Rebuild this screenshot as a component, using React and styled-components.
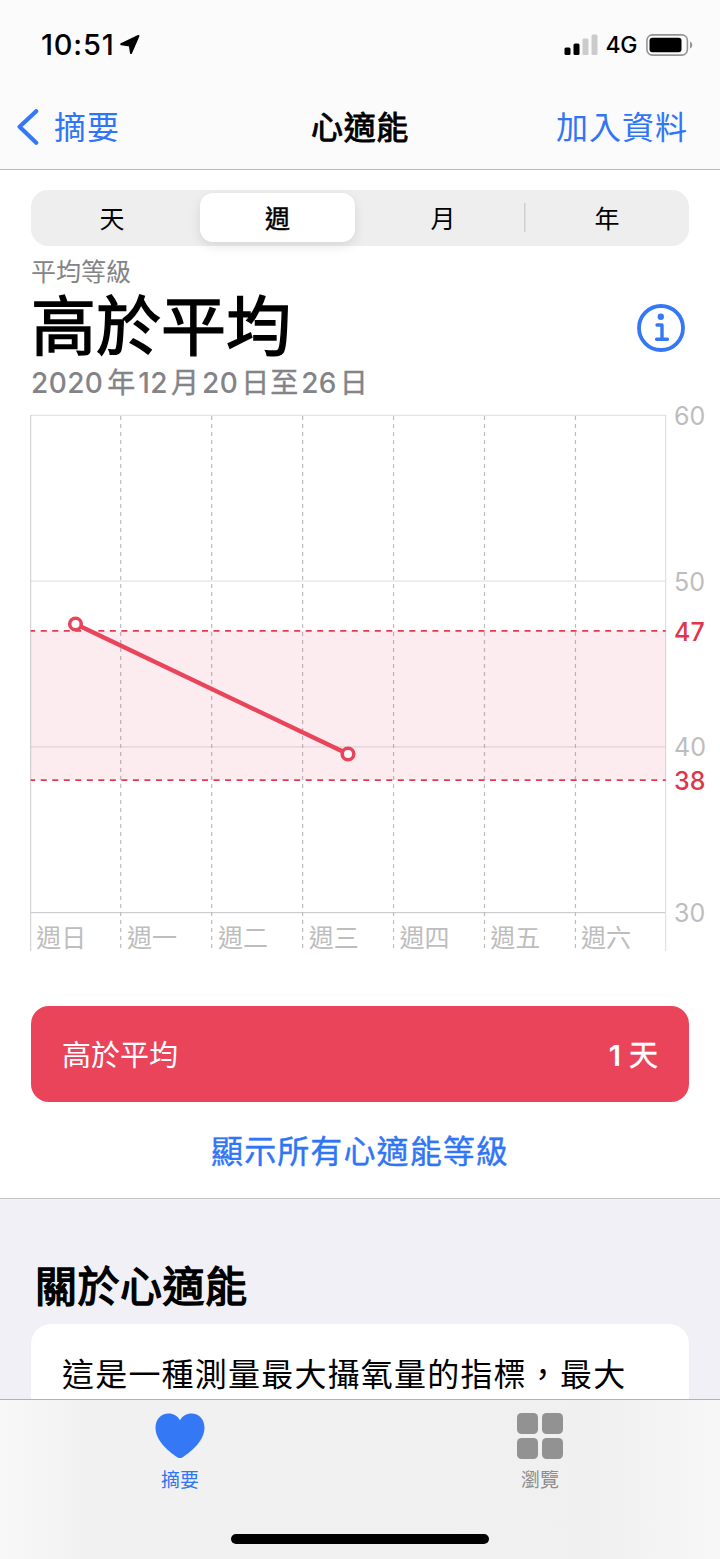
import React from 'react'
import styled, { createGlobalStyle } from 'styled-components'

const GlobalStyle = createGlobalStyle`
  * {
    box-sizing: border-box;
  }
  body {
    margin: 0;
    background: #fff;
    font-family: Inter, 'Noto Sans CJK TC', sans-serif;
    color: #000;
    text-autospace: no-autospace;
  }
`

const Phone = styled.div`
  width: 720px;
  height: 1559px;
  overflow: hidden;
  display: flex;
  flex-direction: column;
`

const Header = styled.header`
  height: 170px;
  background: #fbfbfc;
  border-bottom: 1px solid #b9b9bb;
`

const StatusBar = styled.div`
  height: 88px;
  padding: 1px 27px 0 41px;
  display: flex;
  align-items: center;
  justify-content: space-between;
`

const StatusGroup = styled.div`
  display: flex;
  align-items: center;
`

const Time = styled.span`
  font-size: 29px;
  font-weight: 550;
  line-height: 40px;
  letter-spacing: 0.8px;
  margin-right: 5px;
`

const Network = styled.span`
  font-size: 23px;
  font-weight: 450;
  line-height: 40px;
  letter-spacing: -0.4px;
  margin: 0 9px 0 8px;
`

const NavBar = styled.nav`
  height: 80px;
  padding: 0 32px 0 17px;
  display: flex;
  align-items: center;
  justify-content: space-between;
`

const NavLink = styled.a`
  display: flex;
  align-items: center;
  gap: 15px;
  color: #3075f6;
  font-size: 32px;
  letter-spacing: 1px;
  line-height: 48px;
`

const NavTitle = styled.h1`
  margin: 0 0 0 44px;
  font-size: 32px;
  line-height: 48px;
  font-weight: 400;
  letter-spacing: 0.6px;
  -webkit-text-stroke: 0.9px #000;
`

const Segments = styled.div`
  height: 56px;
  margin: 20px 31px 0;
  padding: 3px 0 4px;
  display: grid;
  grid-template-columns: 162px 168px 164px 164px;
  background: #eeeeef;
  border-radius: 17px;
`

const Segment = styled.button`
  border: 0;
  padding: 0 0 2px;
  margin: ${(props) => (props.$active ? '0 6px 0 7px' : '0')};
  background: ${(props) => (props.$active ? '#fff' : 'transparent')};
  border-radius: 13px;
  box-shadow: ${(props) => (props.$active ? '0 4px 12px rgba(0, 0, 0, 0.1)' : 'none')};
  font-family: inherit;
  font-size: 25px;
  font-weight: 400;
  -webkit-text-stroke: ${(props) => (props.$active ? '0.5px #000' : '0')};
  color: #000;
  display: flex;
  align-items: center;
  justify-content: center;
`

const DividedSegment = styled(Segment)`
  background: linear-gradient(#cfcfd2, #cfcfd2) left center / 1.5px 29px no-repeat;
  margin-left: -1px;
  padding-left: 1px;
  border-radius: 0;
`

const Summary = styled.section`
  height: 154px;
  padding: 8px 35px 0 31px;
  display: flex;
  justify-content: space-between;
`

const Label = styled.div`
  font-size: 25px;
  line-height: 36px;
  color: #838388;
`

const Level = styled.div`
  padding-top: 2px;
  font-size: 65px;
  line-height: 70px;
  font-weight: 400;
  -webkit-text-stroke: 1.4px #000;
`

const Range = styled.div`
  display: flex;
  font-size: 28px;
  line-height: 42px;
  letter-spacing: 1px;
  color: #838388;
  -webkit-text-stroke: 0.4px #838388;
`

const RangeNumber = styled.span`
  margin-right: ${(props) => props.$gap || 3}px;
  font-weight: 550;
  letter-spacing: 0.4px;
  -webkit-text-stroke: 0;
`

const RangeUnit = styled.span`
  margin-right: 2px;
`

const InfoButton = styled.button`
  align-self: flex-start;
  margin: 50px 0 0;
  padding: 0;
  border: 0;
  background: none;
  height: 48px;
`

const ChartSvg = styled.svg`
  display: block;
  flex: none;
`

const AxisText = styled.text`
  font-size: 25px;
  fill: ${(props) => (props.$accent ? '#e0354b' : '#bdbdbe')};
  font-weight: ${(props) => (props.$accent ? 450 : 400)};
`

const Banner = styled.div`
  height: 96px;
  flex: none;
  margin: 46px 31px 0;
  padding: 0 31px 3px;
  display: flex;
  align-items: center;
  justify-content: space-between;
  background: #ea445a;
  border-radius: 18px;
  color: #fff;
  font-size: 29px;
`

const Days = styled.span`
  display: flex;
  align-items: baseline;
  gap: 8px;
  -webkit-text-stroke: 0.4px #fff;
`

const DayCount = styled.span`
  font-weight: 600;
  -webkit-text-stroke: 0;
`

const ShowAll = styled.a`
  height: 96px;
  flex: none;
  padding-bottom: 3px;
  display: flex;
  align-items: center;
  justify-content: center;
  color: #3075f6;
  font-size: 32px;
  letter-spacing: 1.1px;
  -webkit-text-stroke: 0.4px #3075f6;
`

const About = styled.section`
  flex: 1;
  min-height: 0;
  overflow: hidden;
  background: #f1f0f6;
  border-top: 1px solid #c6c6ca;
  padding: 58px 31px 0;
`

const AboutTitle = styled.h2`
  margin: 0 0 7px 4px;
  font-size: 42px;
  line-height: 60px;
  font-weight: 400;
  letter-spacing: 0.5px;
  -webkit-text-stroke: 1.4px #000;
`

const AboutCard = styled.div`
  height: 200px;
  padding: 27px 31px;
  background: #fff;
  border-radius: 20px;
  font-size: 32px;
  line-height: 48px;
  letter-spacing: 1.2px;
`

const TabBar = styled.footer`
  height: 160px;
  flex: none;
  border-top: 1px solid #b3b3b6;
  background: linear-gradient(90deg, #f8f8f8 0, #f1f1f1 90px, #f0f0f0 600px, #f7f7f7 720px);
  display: flex;
  flex-direction: column;
  align-items: center;
`

const Tabs = styled.div`
  width: 100%;
  height: 134px;
  display: grid;
  grid-template-columns: 1fr 1fr;
`

const Tab = styled.a`
  padding-top: 13px;
  display: flex;
  flex-direction: column;
  align-items: center;
  gap: 8px;
  font-size: 19px;
  line-height: 28px;
  color: ${(props) => (props.$active ? '#3075f6' : '#8c8c8c')};
`

const HomeIndicator = styled.div`
  width: 258px;
  height: 10px;
  border-radius: 5px;
  background: #000;
`

const LocationIcon = () => (
  <svg width="20" height="20" viewBox="0 0 20 20">
    <path d="M18.4 1 11 18 9.8 10.6 1.2 9.2Z" fill="#000" stroke="#000" strokeWidth="2" strokeLinejoin="round" />
    <path d="M17.500 2 10.500 15V9.500H4Z" />
  </svg>
)

const SignalIcon = () => (
  <svg width="34" height="22" viewBox="0 0 34 22">
    <rect x="0.5" y="13.5" width="6" height="7.5" rx="1.5" />
    <rect x="9.5" y="9.5" width="6" height="11.5" rx="1.5" />
    <rect x="18.5" y="4.5" width="6" height="16.5" rx="1.5" fill="#cbcbcc" />
    <rect x="27.5" y="0.5" width="6" height="20.5" rx="1.5" fill="#cbcbcc" />
  </svg>
)

const BatteryIcon = () => (
  <svg width="47" height="22" viewBox="0 0 47 22">
    <rect x="0.9" y="0.9" width="40.5" height="20.2" rx="5.5" fill="none" stroke="#949495" strokeWidth="1.6" />
    <rect x="3.5" y="3.8" width="32" height="14.4" rx="3" />
    <path d="M44 7.5c3 1.3 3 5.7 0 7Z" fill="#949495" />
  </svg>
)

const BackIcon = () => (
  <svg width="22" height="38" viewBox="0 0 22 38">
    <path d="M19.2 2.2 2.6 17.8l16.6 16" fill="none" stroke="#3478f6" strokeWidth="4.2" strokeLinecap="round" strokeLinejoin="round" />
  </svg>
)

const InfoIcon = () => (
  <svg width="48" height="48" viewBox="0 0 48 48" fill="none" stroke="#3478f6">
    <circle cx="24" cy="24" r="22" strokeWidth="3.8" />
    <circle cx="23.8" cy="12.8" r="3.2" fill="#3478f6" stroke="none" />
    <path d="M20 21h5v14M19.6 35.3h10.8" strokeWidth="3.4" strokeLinecap="round" strokeLinejoin="round" />
  </svg>
)

const HeartIcon = () => (
  <svg width="50" height="46" viewBox="0 0 50 46">
    <path d="M25 7.2C22.6 2.8 18.4.5 13.6.5 6 .5.5 6.6.5 14.5c0 12.7 11.9 23.2 21.8 29.7 1.9 1.2 3.5 1.2 5.4 0C37.6 37.7 49.5 27.2 49.5 14.5 49.5 6.6 44 .5 36.4.5 31.6.5 27.4 2.8 25 7.2Z" fill="#3478f6" />
  </svg>
)

const BrowseIcon = () => (
  <svg width="48" height="46" viewBox="0 0 48 46" fill="#929292">
    <rect x="1" y="0" width="21" height="21" rx="4.5" />
    <rect x="26" y="0" width="21" height="21" rx="4.5" />
    <rect x="1" y="25" width="21" height="21" rx="4.5" />
    <rect x="26" y="25" width="21" height="21" rx="4.5" />
  </svg>
)

const days = ['週日', '週一', '週二', '週三', '週四', '週五', '週六']
const yTicks = [60, 50, 40, 30]
const limits = [47, 38]
const points = [
  { x: 75.5, y: 224 },
  { x: 348, y: 354 },
]

const left = 30.7
const right = 665.7
const step = 90.8
const yOf = (value) => 15.3 + (60 - value) * 16.58

const Chart = () => (
  <ChartSvg width="720" height="560" viewBox="0 0 720 560">
    {yTicks.map((v) => (
      <line key={v} x1={left} x2={right} y1={yOf(v)} y2={yOf(v)} stroke={v === 30 ? '#c4c4c9' : '#dcdcde'} />
    ))}
    <line x1={left} x2={left} y1="15" y2="551" stroke="#cbcbce" />
    <line x1={right} x2={right} y1="15" y2="551" stroke="#dadadc" />
    {days.slice(1).map((d, i) => (
      <line key={d} x1={120.7 + 90.95 * i} x2={120.7 + 90.95 * i} y1="16" y2="551" stroke="#bcbcbf" strokeWidth="1.2" strokeDasharray="4 4" />
    ))}
    <rect x={left} y={yOf(47)} width={right - left} height={yOf(38) - yOf(47)} fill="#de2a50" fillOpacity="0.095" />
    {limits.map((v) => (
      <line key={v} x1={left} x2={right} y1={yOf(v)} y2={yOf(v)} stroke="#e63950" strokeWidth="1.8" strokeDasharray="6 5.52" strokeDashoffset="1.5" />
    ))}
    <path d={`M${points[0].x} ${points[0].y}L${points[1].x} ${points[1].y}`} stroke="#ea445a" strokeWidth="4.4" />
    {points.map((p) => (
      <circle key={p.x} cx={p.x} cy={p.y} r="5.8" fill="#fff" stroke="#ea445a" strokeWidth="3.6" />
    ))}
    {days.map((d, i) => (
      <AxisText key={d} x={36.3 + step * i} y="547">{d}</AxisText>
    ))}
    {yTicks.map((v) => (
      <AxisText key={v} x="674" y={Math.floor(yOf(v)) + 10}>{v}</AxisText>
    ))}
    {limits.map((v) => (
      <AxisText key={v} $accent x="674" y={Math.round(yOf(v)) + 10}>{v}</AxisText>
    ))}
  </ChartSvg>
)

const App = () => {
  return (
    <Phone>
      <GlobalStyle />
      <Header>
        <StatusBar>
          <StatusGroup>
            <Time>10:51</Time>
            <LocationIcon />
          </StatusGroup>
          <StatusGroup>
            <SignalIcon />
            <Network>4G</Network>
            <BatteryIcon />
          </StatusGroup>
        </StatusBar>
        <NavBar>
          <NavLink><BackIcon />摘要</NavLink>
          <NavTitle>心適能</NavTitle>
          <NavLink>加入資料</NavLink>
        </NavBar>
      </Header>
      <Segments>
        <Segment>天</Segment>
        <Segment $active>週</Segment>
        <Segment>月</Segment>
        <DividedSegment>年</DividedSegment>
      </Segments>
      <Summary>
        <div>
          <Label>平均等級</Label>
          <Level>高於平均</Level>
          <Range>
            <RangeNumber $gap={4}>2020</RangeNumber>
            <RangeUnit>年</RangeUnit>
            <RangeNumber>12</RangeNumber>
            <RangeUnit>月</RangeUnit>
            <RangeNumber>20</RangeNumber>
            <RangeUnit>日至</RangeUnit>
            <RangeNumber>26</RangeNumber>
            <RangeUnit>日</RangeUnit>
          </Range>
        </div>
        <InfoButton><InfoIcon /></InfoButton>
      </Summary>
      <Chart />
      <Banner>
        <span>高於平均</span>
        <Days><DayCount>1</DayCount>天</Days>
      </Banner>
      <ShowAll>顯示所有心適能等級</ShowAll>
      <About>
        <AboutTitle>關於心適能</AboutTitle>
        <AboutCard>這是一種測量最大攝氧量的指標，最大</AboutCard>
      </About>
      <TabBar>
        <Tabs>
          <Tab $active><HeartIcon />摘要</Tab>
          <Tab><BrowseIcon />瀏覽</Tab>
        </Tabs>
        <HomeIndicator />
      </TabBar>
    </Phone>
  )
}

export default App
